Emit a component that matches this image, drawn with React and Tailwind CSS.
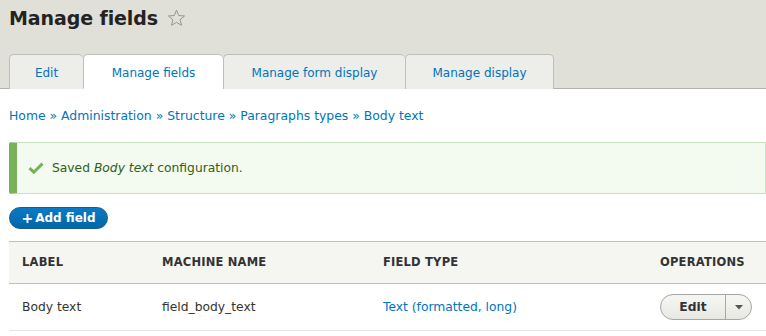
import React from "react";

const font = { fontFamily: '"DejaVu Sans", "Liberation Sans", sans-serif' };

function Star() {
  return (
    <svg width="19" height="18" viewBox="0 0 24 23" className="ml-[9px] mt-[5px]">
      <path
        d="M12 1.5 L14.9 8.4 L22.3 8.9 L16.6 13.7 L18.4 20.9 L12 17 L5.6 20.9 L7.4 13.7 L1.7 8.9 L9.1 8.4 Z"
        fill="none"
        stroke="#8a8a80"
        strokeWidth="1.1"
        strokeLinejoin="miter"
      />
    </svg>
  );
}

function Check() {
  return (
    <svg width="16" height="12" viewBox="0 0 16 12">
      <path d="M1.5 6.2 L5.8 10.2 L14.5 1.6" fill="none" stroke="#77b259" strokeWidth="3" />
    </svg>
  );
}

export default function App() {
  const tabs = [
    { label: "Edit", w: "w-[74px]" },
    { label: "Manage fields", w: "w-[140px]", active: true },
    { label: "Manage form display", w: "w-[182px]" },
    { label: "Manage display", w: "w-[149px]" },
  ];
  return (
    <div className="w-[766px] h-[336px] overflow-hidden bg-white text-[#333]" style={font}>
      <div className="bg-[#e0e0d8]">
        <div className="flex pl-[9px] pt-[4px] h-[54px] items-start">
          <h1 className="text-[19px] font-bold text-[#232323] leading-[28px] tracking-[-0.1px]">Manage fields</h1>
          <Star />
        </div>
        <div className="flex pl-[9px] border-b border-[#b3b3ae] h-[35px]">
          {tabs.map((t, i) => (
            <div
              key={t.label}
              className={`${t.w} h-[35px] flex items-center justify-center text-[12px] text-[#0074bd] border-t border-l border-[#bfbfba] rounded-t-[5px] ${
                i === tabs.length - 1 ? "border-r" : ""
              } ${t.active ? "bg-white relative z-10 border-b border-b-white" : "bg-[#ededea]"}`}
            >
              <span className="mt-[2px]">{t.label}</span>
            </div>
          ))}
        </div>
      </div>
      <div className="pl-[9px]">
        <div className="pt-[18px] h-[53px] text-[12.4px] text-[#0074bd]">
          Home » Administration » Structure » Paragraphs types » Body text
        </div>
        <div className="flex items-center h-[52px] border border-l-8 border-[#c9e1bd] border-l-[#77b259] bg-[#f3faef] rounded-l-[2px] pl-[11px] text-[12.3px] text-[#325e1c]">
          <Check />
          <span className="ml-[8px]">
            Saved <em>Body text</em> configuration.
          </span>
        </div>
        <div className="pt-[13px] h-[47px]">
          <button className="h-[22px] w-[99px] rounded-full bg-gradient-to-b from-[#0a7ac5] to-[#0067a8] border border-[#1e5c90] text-white text-[12px] font-bold flex items-center justify-center">
            <span className="text-[14px] mr-[2px] leading-none">+</span>Add field
          </button>
        </div>
        <table className="w-[757px] border-collapse text-[12.3px] table-fixed">
          <thead>
            <tr className="bg-[#f5f5f2] border-t border-b border-[#bfbfba] h-[42px]">
              <th className="w-[140px] text-left pl-[13px] font-bold uppercase text-[11.5px] tracking-[0.2px]">Label</th>
              <th className="w-[221px] text-left pl-[13px] font-bold uppercase text-[11.5px] tracking-[0.2px]">Machine name</th>
              <th className="w-[277px] text-left pl-[13px] font-bold uppercase text-[11.5px] tracking-[0.2px]">Field type</th>
              <th className="text-left pl-[13px] font-bold uppercase text-[11.5px] tracking-[0.2px]">Operations</th>
            </tr>
          </thead>
          <tbody>
            <tr className="border-b border-[#e6e4df] h-[47px]">
              <td className="pl-[13px]">Body text</td>
              <td className="pl-[13px]">field_body_text</td>
              <td className="pl-[13px] text-[#0074bd]">Text (formatted, long)</td>
              <td className="pl-[13px]">
                <div className="flex h-[26px] w-[92px] rounded-full border border-[#a6a6a6] bg-gradient-to-b from-[#f6f6f3] to-[#e8e8e3] overflow-hidden">
                  <div className="w-[65px] flex items-center justify-center font-bold text-[#333] border-r border-[#a6a6a6]">Edit</div>
                  <div className="flex-1 flex items-center justify-center">
                    <svg width="8" height="5" viewBox="0 0 8 5">
                      <path d="M0 0 H8 L4 4.5 Z" fill="#555" />
                    </svg>
                  </div>
                </div>
              </td>
            </tr>
          </tbody>
        </table>
      </div>
    </div>
  );
}
